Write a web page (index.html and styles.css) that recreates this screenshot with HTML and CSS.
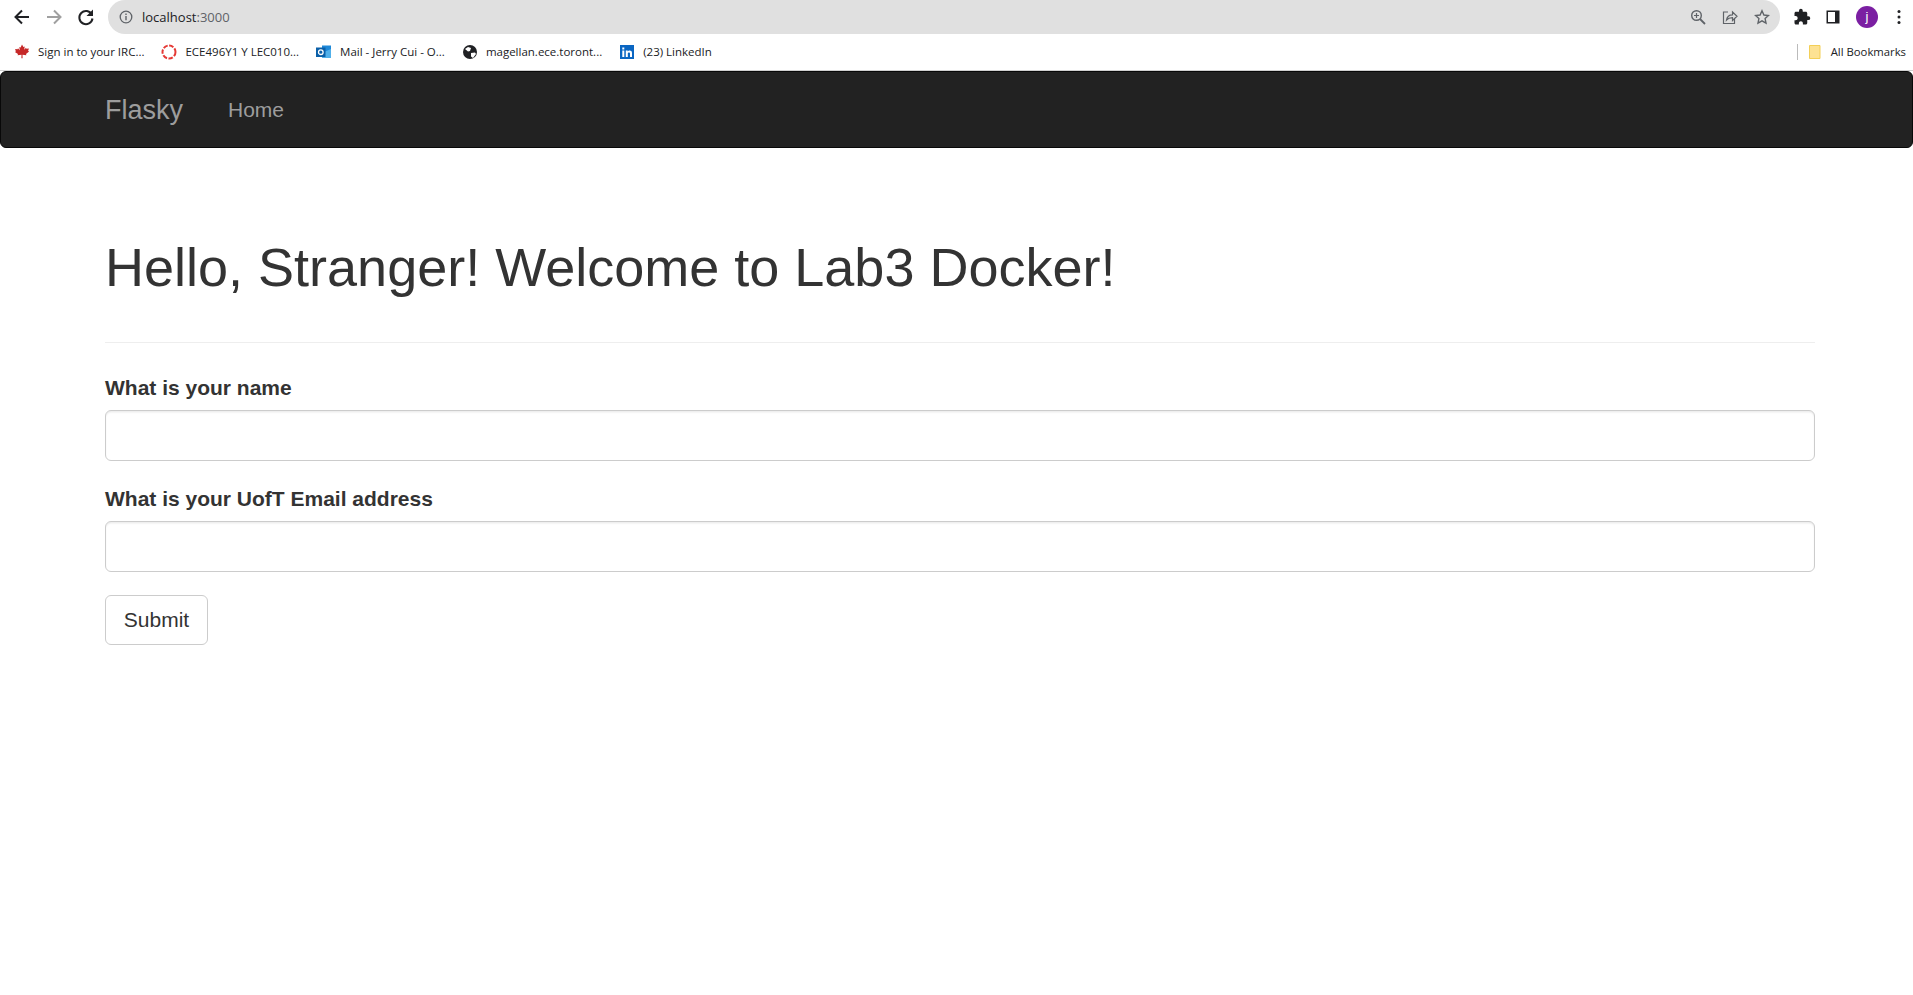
FILE: index.html
```html
<!DOCTYPE html>
<html lang="en">
<head>
    <meta charset="UTF-8">
    <title>Flasky</title>
    <link rel="stylesheet" href="styles.css">
</head>
<body>
    <div class="toolbar">
        <svg class="nav-icon" viewBox="0 0 20 20"><path d="M17 10H4M10 3.500 3.500 10l6.500 6.500" fill="none" stroke="#202124" stroke-width="2"/></svg>
        <svg class="nav-icon" viewBox="0 0 20 20"><path d="M3 10h13M10 3.500l6.500 6.500-6.500 6.500" fill="none" stroke="#a0a0a0" stroke-width="2"/></svg>
        <svg class="nav-icon" viewBox="0 0 20 20"><path d="M15.800 7.500A6.600 6.600 0 1 0 16.500 11.500" fill="none" stroke="#202124" stroke-width="2"/><path d="M17 2.500v6.500h-6.500z" fill="#202124"/></svg>
        <div class="omnibox">
            <svg class="info-icon" viewBox="0 0 14 14"><circle cx="7" cy="7" r="5.800" fill="none" stroke="#5f6368" stroke-width="1.300"/><path d="M7 6v4.200M7 3.600v1.300" stroke="#5f6368" stroke-width="1.400"/></svg>
            <span class="url"><span class="host">localhost</span>:3000</span>
            <div class="omni-actions">
                <svg class="omni-icon" viewBox="0 0 16 16"><circle cx="6.500" cy="6.500" r="4.800" fill="none" stroke="#5f6368" stroke-width="1.400"/><path d="M10 10l5 5" stroke="#5f6368" stroke-width="1.800"/><path d="M6.500 4v5M4 6.500h5" stroke="#5f6368" stroke-width="1.200"/></svg>
                <svg class="omni-icon" viewBox="0 0 16 16"><path d="M6 3H1.500v11.500h11V10" fill="none" stroke="#5f6368" stroke-width="1.200"/><path d="M4.500 11C5 7.500 7.500 5.800 10.500 5.800V3l4.500 4.300-4.500 4.200V8.700C8 8.700 6 9.300 4.500 11z" fill="none" stroke="#5f6368" stroke-width="1.200"/></svg>
                <svg class="omni-icon" viewBox="0 0 16 16"><path d="M8 1.800l1.900 4.200 4.600.5-3.400 3.100.9 4.500-4-2.300-4 2.300.9-4.500-3.400-3.100 4.600-.5z" fill="none" stroke="#5f6368" stroke-width="1.400"/></svg>
            </div>
        </div>
        <div class="chrome-actions">
            <svg class="ext-icon" viewBox="0 0 24 24"><path d="M20.500 11H19V7c0-1.100-.9-2-2-2h-4V3.500a2.500 2.500 0 0 0-5 0V5H4c-1.100 0-2 .9-2 2v3.800h1.500c1.500 0 2.700 1.200 2.700 2.700s-1.200 2.700-2.700 2.700H2V20c0 1.100.9 2 2 2h3.800v-1.500c0-1.500 1.200-2.700 2.700-2.700s2.700 1.200 2.700 2.700V22H17c1.100 0 2-.9 2-2v-4h1.500a2.500 2.500 0 0 0 0-5z" fill="#202124"/></svg>
            <svg class="panel-icon" viewBox="0 0 16 16"><path d="M1.500 1.500h13v13h-13z" fill="#202124"/><path d="M3 3h7v10H3z" fill="#fff"/></svg>
            <div class="avatar">j</div>
            <svg class="menu-icon" viewBox="0 0 4 16"><circle cx="2" cy="2.500" r="1.500"/><circle cx="2" cy="8" r="1.500"/><circle cx="2" cy="13.500" r="1.500"/></svg>
        </div>
    </div>
    <div class="bookmarks">
        <a class="bookmark">
            <svg viewBox="0 0 16 16"><path d="M8 .5l1.400 2.500 1.300-.6-.5 3.300 1.800-1.900.4 1 2.500-.4-.8 2.500 1 .5L12 9.900l.4 1.300-3.900-.4.100 3.500h-1.200l.1-3.500-3.900.4.400-1.300L.9 7.900l1-.5-.8-2.500 2.500.4.4-1 1.800 1.900-.5-3.300 1.300.6z" fill="#c62828"/></svg>
            Sign in to your IRC...
        </a>
        <a class="bookmark">
            <svg viewBox="0 0 16 16"><circle cx="8" cy="8" r="6.500" fill="none" stroke="#e53935" stroke-width="2" stroke-dasharray="4.500 1.500"/></svg>
            ECE496Y1 Y LEC010...
        </a>
        <a class="bookmark">
            <svg viewBox="0 0 16 16"><path d="M6 1.500h9v12H6z" fill="#1e88d8"/><path d="M8 8l7-3v9H6z" fill="#50b0ea"/><path d="M0 3.500h9.500v9.500H0z" fill="#0a5fa8"/><circle cx="4.800" cy="8.200" r="2.300" fill="none" stroke="#fff" stroke-width="1.300"/></svg>
            Mail - Jerry Cui - O...
        </a>
        <a class="bookmark">
            <svg viewBox="0 0 16 16"><circle cx="8" cy="8" r="7" fill="#202124"/><path d="M3 5l3-2 3 1-1 3-2 .5zM9 9l4-.5 1 1.500-3 4-2-1.500z" fill="#fff"/></svg>
            magellan.ece.toront...
        </a>
        <a class="bookmark">
            <svg viewBox="0 0 16 16"><path d="M1 1h14v14H1z" fill="#0a66c2"/><path d="M3.300 6.500h2v6.500h-2zM3.300 3.400h2v2h-2zM6.800 6.500h1.900v.9c.9-1.400 4.300-1.600 4.300 1.500V13h-2V9.500c0-1.500-2.200-1.400-2.200 0V13h-2z" fill="#fff"/></svg>
            (23) LinkedIn
        </a>
        <div class="all-bookmarks">
            <svg viewBox="0 0 12 14"><path d="M.5.500h10.500v13H.5z" fill="#fde293" stroke="#f3cf57"/></svg>
            All Bookmarks
        </div>
    </div>

    <nav class="navbar">
        <div class="container navbar-inner">
            <a class="brand">Flasky</a>
            <a class="nav-link">Home</a>
        </div>
    </nav>

    <div class="container">
        <div class="page-header">
            <h1>Hello, Stranger! Welcome to Lab3 Docker!</h1>
        </div>
        <form>
            <div class="form-group">
                <label for="name">What is your name</label>
                <input id="name" class="form-control" type="text">
            </div>
            <div class="form-group">
                <label for="email">What is your UofT Email address</label>
                <input id="email" class="form-control" type="text">
            </div>
            <button class="btn" type="button">Submit</button>
        </form>
    </div>
</body>
</html>
```

FILE: styles.css
```css
* {
    box-sizing: border-box;
}
body {
    margin: 0;
    font-family: "Liberation Sans", Arial, sans-serif;
    font-size: 21px;
    line-height: 30px;
    color: #333;
    background-color: #fff;
}

/* browser chrome */
.toolbar {
    display: flex;
    align-items: center;
    height: 34px;
    padding-left: 12px;
    background-color: #fff;
}
.nav-icon {
    width: 20px;
    height: 20px;
    margin-right: 12px;
    flex-shrink: 0;
}
.omnibox {
    display: flex;
    align-items: center;
    flex: 1;
    height: 34px;
    padding: 0 10px 0 11px;
    background-color: #e0e0e0;
    border-radius: 17px;
}
.info-icon {
    width: 14px;
    height: 14px;
    margin-right: 9px;
}
.url {
    font-family: "Open Sans", sans-serif;
    font-size: 13px;
    color: #5f6368;
}
.host {
    color: #202124;
}
.omni-actions {
    display: flex;
    gap: 16px;
    margin-left: auto;
}
.omni-icon {
    width: 16px;
    height: 16px;
}
.chrome-actions {
    display: flex;
    align-items: center;
    width: 133px;
    padding-left: 13px;
}
.ext-icon {
    width: 18px;
    height: 18px;
    margin-right: 14px;
}
.panel-icon {
    width: 16px;
    height: 16px;
    margin-right: 15px;
}
.avatar {
    width: 22px;
    height: 22px;
    border-radius: 50%;
    background-color: #7b1fa2;
    color: #fff;
    font-size: 13px;
    line-height: 22px;
    text-align: center;
}
.menu-icon {
    width: 4px;
    height: 16px;
    margin-left: 19px;
    fill: #202124;
}
.bookmarks {
    display: flex;
    align-items: center;
    gap: 17px;
    height: 37px;
    padding: 0 7px 0 14px;
    border-bottom: 1px solid #d0d0d0;
    font-family: "Open Sans", sans-serif;
    font-size: 11.5px;
    line-height: 16px;
    color: #202124;
}
.bookmark {
    display: flex;
    align-items: center;
    gap: 8px;
}
.bookmark svg {
    width: 16px;
    height: 16px;
}
.all-bookmarks {
    display: flex;
    align-items: center;
    gap: 10px;
    margin-left: auto;
    padding-left: 11px;
    border-left: 1px solid #bbb;
    font-size: 11.3px;
}
.all-bookmarks svg {
    width: 12px;
    height: 14px;
}

/* page */
.container {
    width: 1710px;
    margin-left: 105px;
}
.navbar {
    height: 77px;
    background-color: #222;
    border: 1px solid #080808;
    border-radius: 6px;
}
.navbar-inner {
    display: flex;
    align-items: center;
    height: 100%;
    margin-left: 104px;
}
.brand {
    font-size: 27px;
    color: #9d9d9d;
}
.nav-link {
    margin-left: 45px;
    color: #9d9d9d;
}
.page-header {
    margin: 90px 0 30px;
    padding-bottom: 45px;
    border-bottom: 1px solid #eee;
}
h1 {
    margin: 0;
    font-size: 54px;
    font-weight: 500;
    line-height: 59.4px;
}
.form-group {
    margin-bottom: 23px;
}
label {
    display: block;
    margin-bottom: 7px;
    font-weight: 700;
}
.form-control {
    display: block;
    width: 100%;
    height: 51px;
    border: 1.5px solid #ccc;
    border-radius: 6px;
    box-shadow: inset 0 1.5px 1.5px rgba(0, 0, 0, 0.075);
}
.btn {
    width: 103px;
    height: 50px;
    padding: 0;
    font-family: inherit;
    font-size: 21px;
    color: #333;
    background-color: #fff;
    border: 1.5px solid #ccc;
    border-radius: 6px;
}
```
